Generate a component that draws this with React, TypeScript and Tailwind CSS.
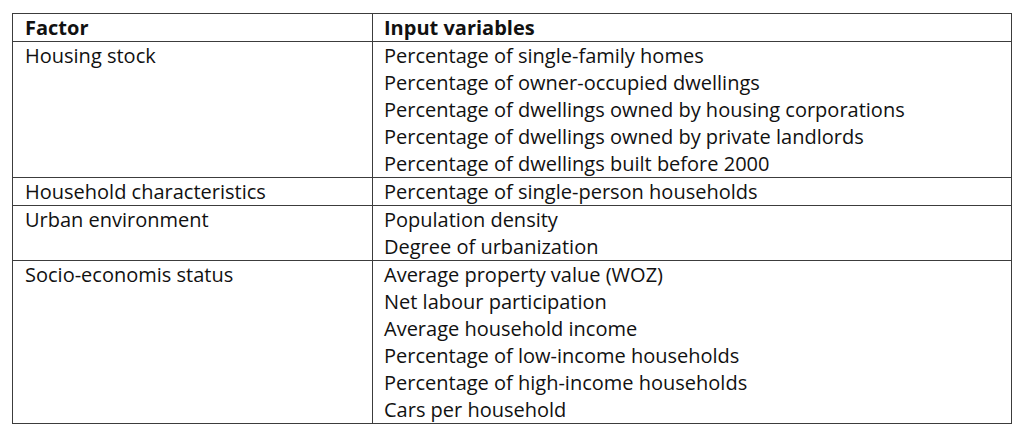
const rows = [
  {
    factor: 'Housing stock',
    inputs: [
      'Percentage of single-family homes',
      'Percentage of owner-occupied dwellings',
      'Percentage of dwellings owned by housing corporations',
      'Percentage of dwellings owned by private landlords',
      'Percentage of dwellings built before 2000',
    ],
  },
  {
    factor: 'Household characteristics',
    inputs: ['Percentage of single-person households'],
  },
  {
    factor: 'Urban environment',
    inputs: ['Population density', 'Degree of urbanization'],
  },
  {
    factor: 'Socio-economis status',
    inputs: [
      'Average property value (WOZ)',
      'Net labour participation',
      'Average household income',
      'Percentage of low-income households',
      'Percentage of high-income households',
      'Cars per household',
    ],
  },
];

export default function App() {
  return (
    <div className="w-[1024px] h-[433px] bg-white pt-[13px] pl-[12px] font-['Open_Sans',sans-serif] text-[20px] text-[#111]">
      <table className="w-[1000px] border-collapse">
        <thead>
          <tr className="h-[28px]">
            <th className="w-[360px] border border-[#3c3c3c] px-[12px] text-left font-bold align-middle leading-[26px]">
              Factor
            </th>
            <th className="border border-[#3c3c3c] px-[11px] text-left font-bold align-middle leading-[26px]">
              Input variables
            </th>
          </tr>
        </thead>
        <tbody>
          {rows.map((row) => (
            <tr key={row.factor}>
              <td className="border border-[#3c3c3c] px-[12px] align-top leading-[27px]">{row.factor}</td>
              <td className="border border-[#3c3c3c] px-[11px] align-top">
                {row.inputs.map((item) => (
                  <div key={item} className="h-[27px] leading-[27px]">
                    {item}
                  </div>
                ))}
              </td>
            </tr>
          ))}
        </tbody>
      </table>
    </div>
  );
}
